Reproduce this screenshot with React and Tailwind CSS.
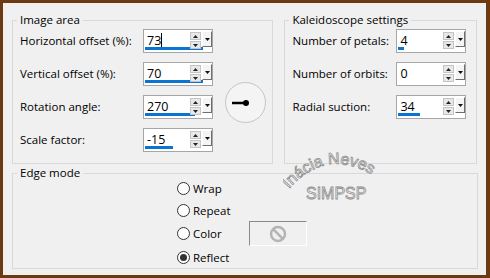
import React from "react";

const font = { fontFamily: '"Open Sans", "Noto Sans", sans-serif' };

const Spin = ({ value, bar, caret }) => (
  <div className="relative w-[70px] h-[24px] border border-[#a6a6a6] bg-white">
    <span className="absolute left-[3px] top-[3px] text-[12.5px] leading-[16px] text-black">
      {value}
      {caret && <span className="inline-block w-px h-[14px] bg-black align-[-2px]" />}
    </span>
    <div className="absolute left-[1px] bottom-[2px] h-[3px] bg-[#0a74d4]" style={{ width: bar }} />
    <div className="absolute left-[46px] top-[2px] w-[11px] flex flex-col gap-px">
      <div className="h-[8px] bg-[#e8e8e8] border border-[#c4c4c4] flex items-center justify-center">
        <svg width="5" height="3" viewBox="0 0 5 3"><path d="M0 3 L2.5 0 L5 3 Z" fill="#222" /></svg>
      </div>
      <div className="h-[8px] bg-[#e8e8e8] border border-[#c4c4c4] flex items-center justify-center">
        <svg width="5" height="3" viewBox="0 0 5 3"><path d="M0 0 L2.5 3 L5 0 Z" fill="#222" /></svg>
      </div>
    </div>
    <div className="absolute left-[58px] top-[1px] w-[10px] h-[16px] bg-[#f4f4f4] border-r border-b border-[#6e6e6e] border-l border-t border-l-white border-t-white flex items-center justify-center">
      <svg width="5" height="3" viewBox="0 0 5 3"><path d="M0 0 L2.5 3 L5 0 Z" fill="#111" /></svg>
    </div>
  </div>
);

const Row = ({ label, w, children }) => (
  <div className="flex items-center h-[24px]">
    <span className={`${w} text-[11.5px] text-black`}>{label}</span>
    {children}
  </div>
);

const Radio = ({ label, on }) => (
  <div className="flex items-center h-[21px] gap-[3px]">
    <span className="w-[13px] h-[13px] rounded-full border border-[#333] bg-white flex items-center justify-center">
      {on && <span className="w-[7px] h-[7px] rounded-full bg-[#333]" />}
    </span>
    <span className="text-[11.5px] text-black">{label}</span>
  </div>
);

export default function App() {
  return (
    <div className="w-[490px] h-[278px] bg-[#6b3a10] pl-[3px] pt-[3px] pr-[4px] pb-[3px]" style={font}>
      <div className="relative w-full h-full bg-[#f0f0f0] px-[9px] pt-[9px]">
        <div className="flex gap-[11px]">
          <fieldset className="w-[262px] h-[152px] border border-[#d9d9d9] pl-[7px] m-0">
            <legend className="ml-[-3px] px-[3px] text-[11.5px] leading-[16px] text-black">Image area</legend>
            <div className="flex mt-[1px]">
              <div className="flex flex-col gap-[9px]">
                <Row label="Horizontal offset (%):" w="w-[123px]"><Spin value="73" bar={58} caret /></Row>
                <Row label="Vertical offset (%):" w="w-[123px]"><Spin value="70" bar={58} /></Row>
                <Row label="Rotation angle:" w="w-[123px]"><Spin value="270" bar={50} /></Row>
                <Row label="Scale factor:" w="w-[123px]"><Spin value="-15" bar={28} /></Row>
              </div>
              <div className="ml-[12px] mt-[53px] w-[41px] h-[41px] rounded-full border border-[#c4c4c4] bg-[#f4f4f4] relative">
                <svg className="absolute left-0 top-0" width="41" height="41" viewBox="0 0 41 41">
                  <line x1="6" y1="20" x2="20" y2="20" stroke="#000" strokeWidth="2.5" />
                  <circle cx="20" cy="20" r="3" fill="#000" />
                </svg>
              </div>
            </div>
          </fieldset>
          <fieldset className="w-[193px] h-[152px] border border-[#d9d9d9] pl-[7px] m-0">
            <legend className="ml-[-3px] px-[3px] text-[11.5px] leading-[16px] text-black">Kaleidoscope settings</legend>
            <div className="flex flex-col gap-[9px] mt-[1px]">
              <Row label="Number of petals:" w="w-[104px]"><Spin value="4" bar={6} /></Row>
              <Row label="Number of orbits:" w="w-[104px]"><Spin value="0" bar={0} /></Row>
              <Row label="Radial suction:" w="w-[104px]"><Spin value="34" bar={22} /></Row>
            </div>
          </fieldset>
        </div>
        <fieldset className="mt-[1px] w-[466px] h-[104px] border border-[#d9d9d9] pl-[7px] m-0">
          <legend className="ml-[-3px] px-[3px] text-[11.5px] leading-[16px] text-black">Edge mode</legend>
          <div className="ml-[157px] mt-[-3px] flex flex-col gap-[0.7px]">
            <Radio label="Wrap" />
            <Radio label="Repeat" />
            <div className="flex items-center gap-[27px]">
              <Radio label="Color" />
              <div className="w-[58px] h-[25px] border-t border-l border-[#8a8a8a] border-r border-b border-r-white border-b-white bg-[#f0f0f0] flex items-center justify-center">
                <svg width="18" height="18" viewBox="0 0 18 18">
                  <circle cx="9" cy="9" r="7" fill="none" stroke="#b4b4b4" strokeWidth="2.5" />
                  <line x1="4.2" y1="4.2" x2="13.8" y2="13.8" stroke="#b4b4b4" strokeWidth="2.5" />
                </svg>
              </div>
            </div>
            <Radio label="Reflect" on />
          </div>
        </fieldset>
        <svg className="absolute left-[280px] top-[143px]" width="110" height="60" viewBox="0 0 110 60">
          <defs>
            <path id="arc" d="M6 43 Q48 -5 104 39" fill="none" />
          </defs>
          <text fontFamily='"Liberation Sans", Arial, sans-serif' fontSize="16" fill="#fff" stroke="#8e8e8e" strokeWidth="0.8">
            <textPath href="#arc">Inácia Neves</textPath>
          </text>
          <text x="23" y="53" fontFamily='"Liberation Sans", Arial, sans-serif' fontSize="16" fill="#fff" stroke="#8e8e8e" strokeWidth="0.8">SIMPSP</text>
        </svg>
      </div>
    </div>
  );
}
